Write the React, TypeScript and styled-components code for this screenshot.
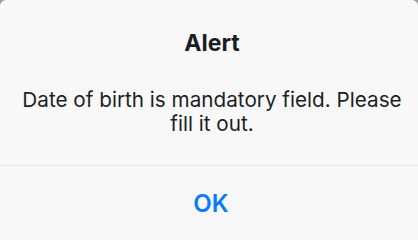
import styled, { createGlobalStyle } from "styled-components";

const GlobalStyle = createGlobalStyle`
  html, body {
    margin: 0;
    padding: 0;
    background: #f8f8f8;
  }
  body {
    font-family: Inter, "Liberation Sans", Arial, sans-serif;
  }
`;

const Backdrop = styled.div`
  width: 418px;
  height: 233px;
  background: #9c9c9c;
`;

const Dialog = styled.div`
  width: 100%;
  height: 100%;
  box-sizing: border-box;
  display: flex;
  flex-direction: column;
  background: #f8f8f8;
  border-radius: 6px 6px 0 0;
  overflow: hidden;
`;

const Content = styled.div`
  display: flex;
  flex-direction: column;
  align-items: center;
  padding: 29px 12px 29px 18px;
  border-bottom: 1px solid #dfe8e8;
  text-align: center;
`;

const Title = styled.h2`
  margin: 0;
  font-size: 23px;
  line-height: 29px;
  font-weight: 700;
  color: #1a1d22;
`;

const Message = styled.p`
  margin: 30px 0 0;
  font-size: 20.7px;
  line-height: 24px;
  font-weight: 400;
  color: #1c1f24;
`;

const ActionButton = styled.button`
  flex: 1;
  border: none;
  background: transparent;
  padding: 23px 0 0 4px;
  display: flex;
  justify-content: center;
  align-items: flex-start;
  font-family: Inter, "Liberation Sans", Arial, sans-serif;
  font-size: 24px;
  line-height: 29px;
  font-weight: 600;
  color: #0a7aff;
  cursor: pointer;
`;

export default function App() {
  return (
    <>
      <GlobalStyle />
      <Backdrop>
        <Dialog>
          <Content>
            <Title>Alert</Title>
            <Message>Date of birth is mandatory field. Please fill it out.</Message>
          </Content>
          <ActionButton>OK</ActionButton>
        </Dialog>
      </Backdrop>
    </>
  );
}
